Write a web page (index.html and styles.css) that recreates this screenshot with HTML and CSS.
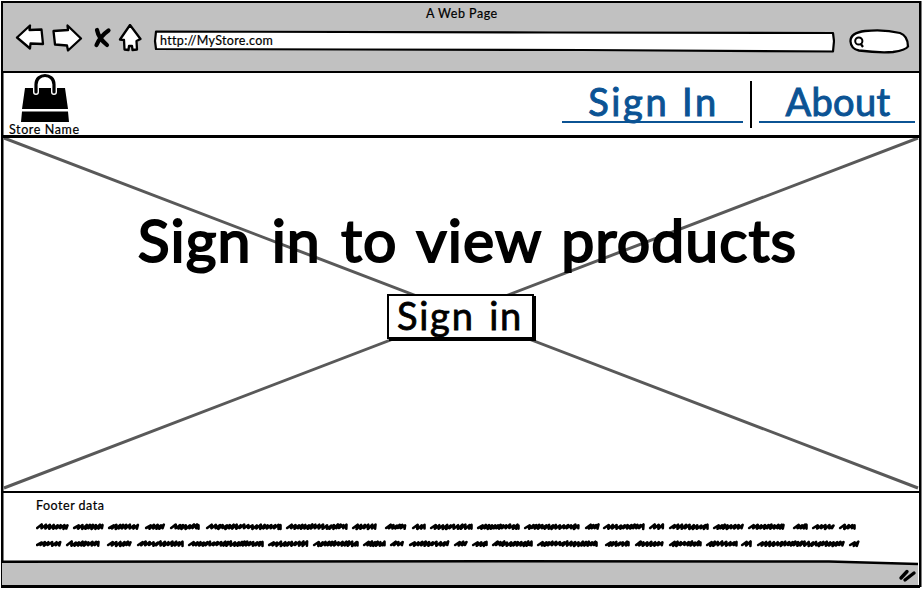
FILE: index.html
```
<!DOCTYPE html>
<html lang="en">
<head>
<meta charset="utf-8">
<title>A Web Page</title>
<link rel="stylesheet" href="styles.css">
</head>
<body>
<div class="window">
  <header class="chrome">
    <div class="title"><span>A Web Page</span></div>
    <div class="toolbar">
      <svg class="icons" viewBox="0 0 130 34" width="130" height="34">
        <g fill="#fff" stroke="#000" stroke-width="2.300" stroke-linejoin="round">
          <path d="M2 13.500 15 1.500 14.500 6 26.500 5.500 28 20 15.500 19.500 15 24.500Z"/>
          <path d="M38.500 7 53 6 52.500 1.500 66 14.500 53 26.500 52 21.500 40 20.500Z"/>
          <path d="M115 1 105 15.500 109 16 109.500 25.500 113.500 26 114 22 117 22 117.500 26 122 25.500 121.500 17 125.500 15Z"/>
        </g>
        <path d="M82 6Q83.500 14 92 21M93.500 6.500Q85.500 12 81.500 21" fill="none" stroke="#000" stroke-width="4.200" stroke-linecap="round"/>
      </svg>
      <div class="address">
        <svg viewBox="0 0 682 24" width="682" height="24"><path d="M3 2.500 2 12 3 20 200 20.500 430 21 680 22.500 681 12 680 4 400 3.500Z" fill="#fff" stroke="#000" stroke-width="2.200" stroke-linejoin="round"/></svg>
        <span class="url">http://MyStore.com</span>
      </div>
      <svg class="search" viewBox="0 0 62 28" width="62" height="28">
        <path d="M2.500 13.500Q2 5 17 3Q36 1 52 5Q60 8 60 18.500Q58 22 45 24Q30 25 11 22.500Q3 21 2.500 13.500Z" fill="#fff" stroke="#000" stroke-width="2.300"/>
        <circle cx="10.800" cy="13" r="3.600" fill="none" stroke="#000" stroke-width="2"/>
        <path d="m12.500 15.500 2.500 3.500" stroke="#000" stroke-width="2.200"/>
      </svg>
    </div>
  </header>
  <div class="store">
    <div class="brand">
      <svg viewBox="0 0 48 50" width="48" height="50">
        <path d="M4 15H44L47 36H1ZM1 38.500H47L48 49H0Z"/>
        <path d="M15 19V11.500C15 -.5 33 -.5 33 11.500V19" fill="none" stroke="#fff" stroke-width="6" stroke-linecap="round"/>
        <path d="M15 19V11.500C15 -.5 33 -.5 33 11.500V19" fill="none" stroke="#000" stroke-width="3.200" stroke-linecap="round"/>
      </svg>
      <span class="store-name">Store Name</span>
    </div>
    <nav class="nav">
      <a class="link sign"><span>Sign In</span></a>
      <i class="divider"></i>
      <a class="link about"><span>About</span></a>
    </nav>
  </div>
  <main class="hero">
    <svg class="cross" viewBox="0 0 916 353" width="916" height="353"><path d="M1 0 915 350M1 350 915 0" stroke="#595959" stroke-width="3"/></svg>
    <h1 class="headline"><span>Sign in to view products</span></h1>
    <button class="button"><span>Sign in</span></button>
  </main>
  <footer class="footer">
    <div class="footer-title"><span>Footer data</span></div>
    <svg class="scribble" viewBox="36 518 830 34" width="830" height="34"></svg>
  </footer>
  <div class="status">
    <svg class="bar" viewBox="2 0 919 28" width="919" height="28">
      <path d="M3 1.500 500 1 830 1.500 919 4V26H3Z" fill="#c1c1c1"/>
      <path d="M3 1.700 500 1.300 830 1.500 919 4" fill="none" stroke="#000" stroke-width="2.600"/>
      <path d="M902 18 908 11.500M906 20 915 13" fill="none" stroke="#000" stroke-width="3.400" stroke-linecap="round"/>
    </svg>
  </div>
</div>
<script src="script.js"></script>
</body>
</html>
```
FILE: styles.css
```
* { box-sizing: border-box; }
body {
  margin: 0;
  background: #fff;
  color: #000;
  font-family: Lato, "Liberation Sans", sans-serif;
}
span { white-space: nowrap; }
svg { display: block; flex: none; }
.window {
  width: 922px;
  height: 589px;
  padding: 1px 1px 0 1px;
  display: flex;
  flex-direction: column;
  background: linear-gradient(#000, #000) 1px 1px / 2.500px 586px no-repeat,
    linear-gradient(#000, #000) 919px 1px / 2.500px 586px no-repeat;
}
.chrome {
  height: 72px;
  margin: 0 2px;
  flex: none;
  background: #c1c1c1;
  border-top: 2px solid #000;
  border-bottom: 2px solid #000;
}
.title {
  height: 21px;
  line-height: 22px;
  padding-left: 423px;
  font-size: 12.500px;
  letter-spacing: .5px;
}
.toolbar { display: flex; padding-left: 12px; }
.icons { margin-right: 8px; }
.address { display: flex; width: 682px; padding-top: 5px; }
.address .url {
  margin-left: -675px;
  line-height: 24px;
  font-size: 12.500px;
  letter-spacing: .32px;
}
.title, .url, .store-name, .footer-title { -webkit-text-stroke: .2px #000; }
.search { margin: 4px 0 0 13px; }
.store {
  height: 65px;
  margin: 0 2px;
  flex: none;
  display: flex;
  justify-content: space-between;
  border-bottom: 3px solid #000;
}
.brand { padding: 0 0 0 6px; width: 90px; }
.brand svg { margin-left: 12px; }
.store-name { display: block; font-size: 12.500px; line-height: 14px; letter-spacing: .6px; }
.nav { display: flex; padding: 8px 4px 0 0; }
.link {
  height: 42px;
  color: #0b5394;
  border-bottom: 2px solid #0b5394;
  text-align: center;
  font-size: 38px;
  line-height: 41px;
  -webkit-text-stroke: 1px #0b5394;
  stroke-linejoin: round;
}
.sign { width: 181px; letter-spacing: 2.700px; padding-left: 2px; }
.about { width: 156px; letter-spacing: .3px; padding-left: 2px; }
.divider { width: 2px; height: 47px; margin: 0 7px; background: #000; }
.hero {
  position: relative;
  height: 353px;
  flex: none;
  margin: 0 2px;
  display: flex;
  flex-direction: column;
  align-items: center;
}
.cross { position: absolute; left: 0; top: 0; }
.headline {
  position: relative;
  margin: 64px 0 0 13px;
  height: 76px;
  font-size: 59px;
  line-height: 76px;
  font-weight: 400;
  letter-spacing: 1.050px;
  word-spacing: 4px;
  -webkit-text-stroke: 2px #000;
}
.button {
  position: relative;
  width: 147px;
  height: 45px;
  margin: 16px 2px 0 0;
  padding: 0 0 3px;
  background: #fff;
  border: 2px solid #000;
  box-shadow: 2px 2px 0 #000;
  font: 38px/38px Lato, sans-serif;
  letter-spacing: 1.800px;
  word-spacing: 3px;
  color: #000;
  -webkit-text-stroke: .8px #000;
}
.footer {
  height: 70px;
  flex: none;
  margin: 0 2px;
  border-top: 2.500px solid #000;
  padding: 5px 0 0 33px;
}
.footer-title { height: 20px; font-size: 12.500px; line-height: 15px; letter-spacing: .5px; }
.status { margin: -1px 0 0; height: 28px; border-bottom: 3px solid #000; width: 919px; overflow: hidden; }
```
FILE: script.js
```
// Draws the placeholder copy: each pair is the start and end of one scribbled word.
const rows = [
  [526.500, [36,68,73,103,108,139,145,165,170,199,206,281,286,347,352,376,385,407,412,425,430,472,477,519,524,579,585,599,603,644,649,665,669,708,713,744,748,784,793,807,812,834,839,855]],
  [543.500, [36,61,66,99,107,131,137,183,188,263,268,308,313,358,363,385,390,404,409,449,454,467,472,487,492,532,537,597,605,629,635,663,669,701,706,737,741,752,757,844,849,859]]
];
let d = "";
let seed = 7;
const rand = () => (seed = (seed * 16807) % 2147483647) / 2147483647;
for (const [y, w] of rows) {
  for (let i = 0; i < w.length; i += 2) {
    let x = w[i] + 1.200;
    const end = w[i + 1] - .5;
    d += `M${x} ${y + 1.500}`;
    while (x < end - 2) {
      const top = Math.min(x + 4.500, end);
      d += `L${top.toFixed(1)} ${(y - 2 + rand()).toFixed(1)}`;
      x = Math.min(x + 2.600 + rand() * 1.800, end);
      d += `L${x.toFixed(1)} ${(y + 1.500 + rand()).toFixed(1)}`;
    }
  }
}
const path = document.createElementNS("http://www.w3.org/2000/svg", "path");
path.setAttribute("d", d);
path.setAttribute("fill", "none");
path.setAttribute("stroke", "#000");
path.setAttribute("stroke-width", "2.6");
path.setAttribute("stroke-linecap", "round");
path.setAttribute("stroke-linejoin", "round");
document.querySelector(".scribble").append(path);
```
